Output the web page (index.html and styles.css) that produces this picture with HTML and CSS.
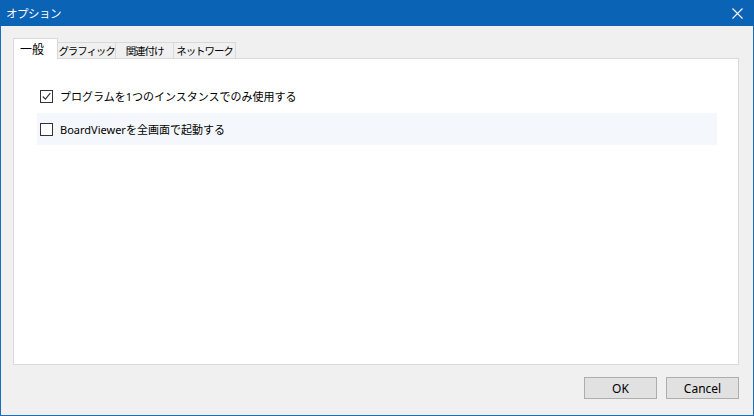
FILE: index.html
```html
<!DOCTYPE html>
<html lang="ja">
<head>
    <meta charset="UTF-8">
    <title>オプション</title>
    <link rel="stylesheet" href="styles.css">
</head>
<body>
    <div class="window">
        <div class="titlebar">
            <span class="title">オプション</span>
            <svg class="close" width="11" height="11" viewBox="0 0 11 11">
                <path d="M0.5 0.5 L10.5 10.5 M10.5 0.5 L0.5 10.5" stroke="#fff" stroke-width="1.1" fill="none"/>
            </svg>
        </div>
        <div class="client">
            <div class="tabs">
                <div class="tab active">一般</div>
                <div class="tab w58">グラフィック</div>
                <div class="tab w58">関連付け</div>
                <div class="tab w62">ネットワーク</div>
            </div>
            <div class="panel">
                <label class="option">
                    <span class="check">
                        <svg width="9" height="9" viewBox="0 0 9 9">
                            <path d="M0.8 4.5 L3.4 7.2 L8.3 1.2" stroke="#333" stroke-width="1.1" fill="none"/>
                        </svg>
                    </span>
                    プログラムを1つのインスタンスでのみ使用する
                </label>
                <label class="option hover">
                    <span class="check"></span>
                    BoardViewerを全画面で起動する
                </label>
            </div>
            <div class="buttons">
                <button>OK</button>
                <button>Cancel</button>
            </div>
        </div>
    </div>
</body>
</html>
```

FILE: styles.css
```css
html, body {
    margin: 0;
    padding: 0;
}
body {
    font-family: "Noto Sans", "Noto Sans CJK JP", sans-serif;
    font-size: 12px;
    color: #000;
    width: 754px;
    height: 416px;
    overflow: hidden;
}
.window {
    box-sizing: border-box;
    width: 754px;
    height: 416px;
    border: 1px solid #1a6dbd;
    border-top: none;
    background-color: #f0f0f0;
    display: flex;
    flex-direction: column;
}
.titlebar {
    flex-shrink: 0;
    height: 26px;
    background-color: #0b63b6;
    color: white;
    display: flex;
    align-items: center;
    justify-content: space-between;
    padding: 0 11px 0 6px;
    margin: 0 -1px;
}
.title {
    font-family: "Noto Sans CJK JP", sans-serif;
    font-size: 11.5px;
    letter-spacing: -0.5px;
}
.client {
    flex: 1;
    display: flex;
    flex-direction: column;
    padding: 12px 14px 0 12px;
}
.tabs {
    display: flex;
    align-items: flex-end;
    height: 20px;
    position: relative;
    z-index: 1;
}
.tab {
    box-sizing: border-box;
    font-family: "Noto Sans CJK JP", sans-serif;
    font-size: 10.5px;
    letter-spacing: -1.1px;
    text-align: center;
    height: 16px;
    line-height: 15px;
    background-color: #f0f0f0;
    border: 1px solid #d9d9d9;
    border-bottom: none;
    margin-left: -1px;
}
.tab.w58 {
    width: 59px;
}
.tab.w62 {
    width: 63px;
}
.tab.active {
    width: 45px;
    height: 21px;
    line-height: 19px;
    background-color: white;
    text-align: left;
    padding-left: 6px;
    margin-left: 0;
    margin-bottom: -1px;
    font-size: 12px;
    letter-spacing: 0;
}
.panel {
    box-sizing: border-box;
    height: 307px;
    background-color: white;
    border: 1px solid #d9d9d9;
    padding: 21px 21px 0 23px;
    display: flex;
    flex-direction: column;
    gap: 1px;
}
.option {
    display: flex;
    align-items: center;
    gap: 7px;
    height: 32px;
    padding-left: 3px;
    font-family: "Noto Sans", "Noto Sans CJK JP", sans-serif;
    font-size: 11px;
}
.option.hover {
    background-color: #f4f7fb;
}
.check {
    box-sizing: border-box;
    width: 13px;
    height: 13px;
    border: 1px solid #333;
    background-color: white;
    display: flex;
    align-items: center;
    justify-content: center;
}
.buttons {
    display: flex;
    justify-content: flex-end;
    gap: 9px;
    padding-top: 12px;
}
button {
    width: 73px;
    height: 22px;
    background-color: #e1e1e1;
    border: 1px solid #adadad;
    font-family: "Noto Sans", sans-serif;
    font-size: 12px;
    padding: 0;
    margin: 0;
}
```
